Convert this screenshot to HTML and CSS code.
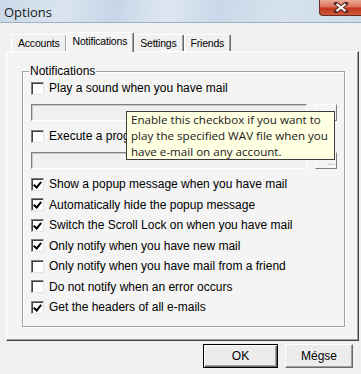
FILE: index.html
```html
<html>

<head>
    <title>Options</title>
    <link rel="stylesheet" href="styles.css">
</head>

<body>

    <div class="window">
        <div class="titlebar">
            <span class="title">Options</span>
            <span class="close">
                <svg width="16" height="11" viewBox="0 0 16 11">
                    <path d="M3 1.5 L13 9.5 M13 1.5 L3 9.5" stroke="#5a2a22" stroke-width="4" stroke-linecap="square" />
                    <path d="M3.5 2 L12.5 9 M12.5 2 L3.5 9" stroke="#fff" stroke-width="2.2" />
                </svg>
            </span>
        </div>

        <div class="client">
            <div class="tabs">
                <div class="tab">Accounts</div>
                <div class="tab active">Notifications</div>
                <div class="tab">Settings</div>
                <div class="tab">Friends</div>
            </div>

            <div class="panel">
                <fieldset class="group">
                    <legend>Notifications</legend>

                    <div class="row"><span class="check"></span><label>Play a sound when you have mail</label></div>
                    <div class="fieldrow"><span class="field"></span><span class="browse">...</span></div>

                    <div class="row"><span class="check"></span><label>Execute a program when you have mail</label></div>
                    <div class="fieldrow"><span class="field"></span><span class="browse">...</span></div>

                    <div class="list">
                        <div class="row"><span class="check on"></span><label>Show a popup message when you have mail</label></div>
                        <div class="row"><span class="check on"></span><label>Automatically hide the popup message</label></div>
                        <div class="row"><span class="check on"></span><label>Switch the Scroll Lock on when you have mail</label></div>
                        <div class="row"><span class="check on"></span><label>Only notify when you have new mail</label></div>
                        <div class="row"><span class="check"></span><label>Only notify when you have mail from a friend</label></div>
                        <div class="row"><span class="check"></span><label>Do not notify when an error occurs</label></div>
                        <div class="row"><span class="check on"></span><label>Get the headers of all e-mails</label></div>
                    </div>
                </fieldset>

                <div class="tooltip">
                    Enable this checkbox if you want to<br>
                    play the specified WAV file when you<br>
                    have e-mail on any account.
                </div>
            </div>

            <div class="buttons">
                <button class="btn default">OK</button>
                <button class="btn cancel">Mégse</button>
            </div>
        </div>
    </div>

</body>

</html>
```

FILE: styles.css
```css
body {
    margin: 0;
    font-family: "Liberation Sans", Arial, sans-serif;
    font-size: 12px;
    color: #000;
    background: #f0f0f0;
}

.window {
    width: 361px;
    height: 374px;
    overflow: hidden;
}

/* title bar */
.titlebar {
    height: 22px;
    display: flex;
    justify-content: space-between;
    border-bottom: 1px solid #9fb0c2;
    background: linear-gradient(100deg, #cbd9e8 0%, #d9e4ef 18%, #c6d6e7 32%, #dde7f1 46%, #c9d8e8 60%, #d6e2ee 78%, #cddbe9 100%);
}

.title {
    padding: 3px 0 0 4px;
    font-family: "Open Sans", sans-serif;
    font-size: 13px;
    color: #1b1b1b;
}

.close {
    width: 41px;
    height: 15px;
    display: flex;
    align-items: center;
    justify-content: center;
    border: 1px solid #6b2a20;
    border-top: none;
    border-right: none;
    border-radius: 0 0 0 4px;
    background: linear-gradient(#e9a995 0%, #d9735c 45%, #c2351c 55%, #cf5a3c 100%);
}

/* dialog body */
.client {
    padding: 9px 2px 0 6px;
}

.tabs {
    display: flex;
    align-items: flex-end;
    height: 19px;
    padding-left: 5px;
    font-size: 10.5px;
    letter-spacing: -0.2px;
}

.tab {
    height: 16px;
    line-height: 17px;
    padding: 0 6px;
    border-top: 1px solid #fff;
    border-left: 1px solid #fff;
    border-right: 1px solid #696969;
    border-radius: 2px 2px 0 0;
    box-shadow: inset -1px 0 0 #a0a0a0;
}

.tab.active {
    position: relative;
    z-index: 1;
    height: 19px;
    line-height: 16px;
    margin: 0 -1px -1px -1px;
    padding: 0 6px;
    background: #f4f4f4;
}

.panel {
    position: relative;
    width: 351px;
    height: 288px;
    border-top: 1px solid #fff;
    border-left: 1px solid #fff;
    border-right: 1px solid #404040;
    border-bottom: 1px solid #404040;
    box-shadow: inset -1px -1px 0 #a0a0a0;
    background: #f4f4f4;
}

.group {
    margin: 12px 13px 0 15px;
    padding: 0 0 9px 8px;
    height: 252px;
    border: 1px solid #a0a0a0;
    box-shadow: 1px 1px 0 #fff, inset 1px 1px 0 #fff;
}

.group legend {
    margin-left: -2px;
    padding: 0 1px;
    line-height: 14px;
}

.row {
    display: flex;
    align-items: center;
    height: 20px;
}

.row label {
    margin-left: 5px;
    white-space: nowrap;
}

.check {
    width: 11px;
    height: 11px;
    flex: none;
    background: #fff;
    border: 1px solid;
    border-color: #808080 #e3e3e3 #e3e3e3 #808080;
    box-shadow: inset 1px 1px 0 #404040;
    position: relative;
}

.check.on::after {
    content: "";
    position: absolute;
    left: 3px;
    top: 1px;
    width: 3px;
    height: 6px;
    border: solid #000;
    border-width: 0 2px 2px 0;
    transform: rotate(40deg);
}

.fieldrow {
    display: flex;
    margin: 6px 0 5px;
}

.field {
    width: 274px;
    height: 15px;
    border: 1px solid;
    border-color: #808080 #fff #fff #808080;
    box-shadow: inset 1px 1px 0 #c8c8c8;
    background: #f0f0f0;
}

.browse {
    width: 19px;
    height: 15px;
    margin-left: 8px;
    border: 1px solid;
    border-color: #fff #808080 #808080 #fff;
    color: #a0a0a0;
    font-size: 10px;
    line-height: 18px;
    text-align: right;
    padding-right: 1px;
    box-sizing: content-box;
}

.list {
    margin-top: 2px;
}

.list .row {
    height: 20.5px;
}

/* tooltip over the form */
.tooltip {
    position: absolute;
    left: 119px;
    top: 59px;
    width: 203px;
    height: 47px;
    padding: 0 0 0 4px;
    border: 1px solid #3c3c3c;
    background: #ffffe1;
    font-family: "Open Sans", sans-serif;
    font-size: 11.6px;
    line-height: 16px;
    color: #1a1a1a;
    z-index: 2;
}

/* bottom buttons */
.buttons {
    display: flex;
    justify-content: flex-end;
    gap: 7px;
    margin-top: 3px;
    padding-right: 6px;
}

.btn {
    height: 24px;
    font-family: "Liberation Sans", Arial, sans-serif;
    font-size: 12px;
    background: #ececec;
    border: 1px solid;
    border-color: #fff #696969 #696969 #fff;
    box-shadow: inset -1px -1px 0 #a0a0a0;
}

.btn.default {
    width: 75px;
    border: 1px solid #000;
    box-shadow: inset 1px 1px 0 #fff, inset -1px -1px 0 #696969, inset -2px -2px 0 #a0a0a0;
}

.btn.cancel {
    width: 68px;
}
```
